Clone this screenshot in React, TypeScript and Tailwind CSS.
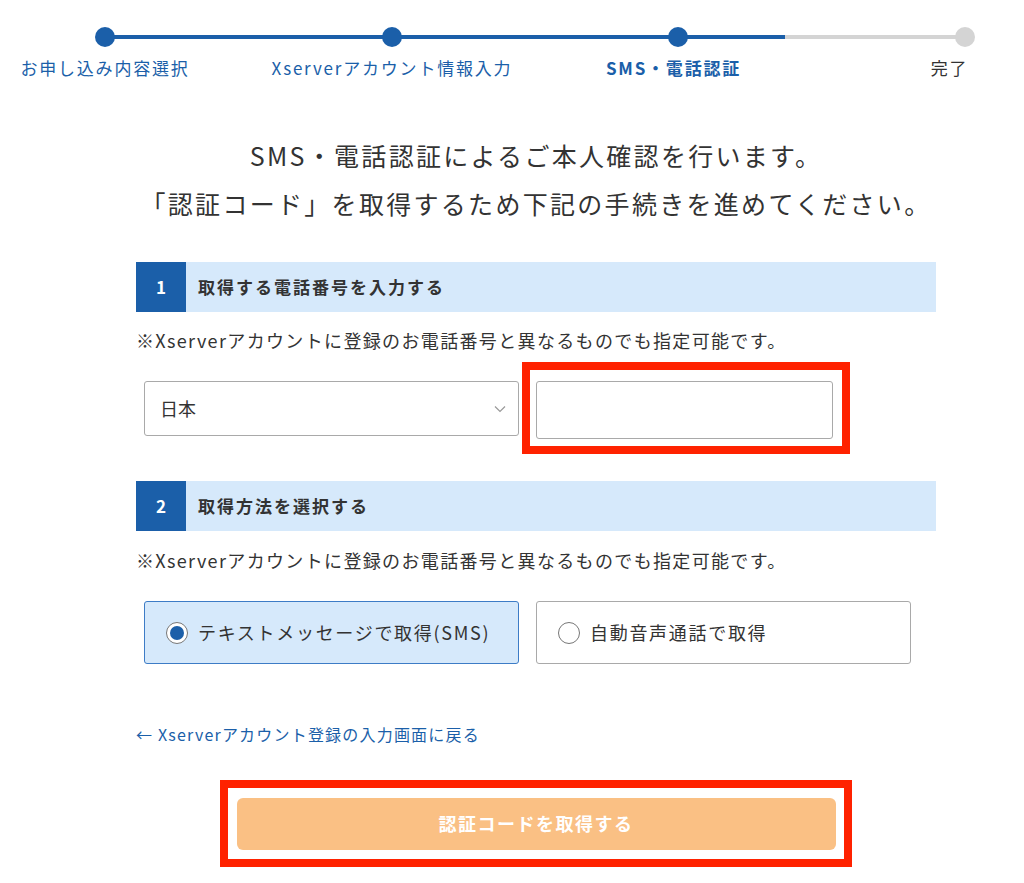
const note = "※Xserverアカウントに登録のお電話番号と異なるものでも指定可能です。";

function Steps() {
  const labels = ["お申し込み内容選択", "Xserverアカウント情報入力", "SMS・電話認証", "完了"];
  return (
    <div className="pt-[27px]">
      <div className="relative ml-[95px] w-[880px] h-[20px] flex justify-between items-center">
        <div className="absolute left-[10px] top-[8px] h-[4px] w-[860px] bg-[#d4d4d4]" />
        <div className="absolute left-[10px] top-[8px] h-[4px] w-[680px] bg-[#1b5fa9]" />
        {[0, 1, 2, 3].map((i) => (
          <div
            key={i}
            className={`relative w-[20px] h-[20px] rounded-full ${i < 3 ? "bg-[#1b5fa9]" : "bg-[#d4d4d4]"}`}
          />
        ))}
      </div>
      <div className="ml-[25px] mt-[9px] flex gap-[127px]">
        {labels.map((l, i) => (
          <div key={l} className="w-[160px] flex justify-center">
            <span
              className={`whitespace-nowrap text-[17px] leading-[24px] tracking-[1.8px] ${
                i === 2 ? "font-bold text-[#1b5fa9]" : i === 3 ? "text-[#333]" : "text-[#1b5fa9]"
              }`}
            >
              {l}
            </span>
          </div>
        ))}
      </div>
    </div>
  );
}

function SectionHead({ n, title }: { n: number; title: string }) {
  return (
    <div className="flex h-[50px] bg-[#d6e9fb]">
      <div className="w-[50px] bg-[#1b5fa9] flex items-center justify-center text-white font-bold text-[17px]">
        {n}
      </div>
      <div className="pl-[12px] flex items-center font-bold text-[17px] tracking-[2px] text-[#333]">{title}</div>
    </div>
  );
}

function Radio({ checked, label }: { checked: boolean; label: string }) {
  return (
    <div
      className={`w-[375px] h-[63px] rounded-[3px] flex items-center pl-[21px] gap-[10px] text-[18px] tracking-[1.7px] text-[#333] ${
        checked ? "bg-[#d6e9fb] border border-[#3d7cc6]" : "bg-white border border-[#a9a9a9]"
      }`}
    >
      <span className="w-[22px] h-[22px] rounded-full border border-[#777] bg-white flex items-center justify-center">
        {checked && <span className="w-[14px] h-[14px] rounded-full bg-[#1b5fa9]" />}
      </span>
      <span>{label}</span>
    </div>
  );
}

export default function App() {
  return (
    <div
      className="w-[1024px] h-[883px] overflow-hidden bg-white text-[#333]"
      style={{ fontFamily: '"Noto Sans CJK JP", "Noto Sans", sans-serif' }}
    >
      <Steps />

      <div className="ml-[136px] w-[800px]">
        <div className="mt-[51px] text-center text-[25px] leading-[48px] tracking-[2.3px] text-[#333] whitespace-nowrap">
          <p>SMS・電話認証によるご本人確認を行います。</p>
          <p>「認証コード」を取得するため下記の手続きを進めてください。</p>
        </div>

        <div className="mt-[35px]">
          <SectionHead n={1} title="取得する電話番号を入力する" />
        </div>
        <p className="mt-[15px] text-[18px] leading-[26px] tracking-[1.35px] whitespace-nowrap">{note}</p>
        <div className="mt-[28px] ml-[8px] flex gap-[17px] items-start">
          <div className="w-[375px] h-[55px] rounded-[3px] border border-[#a9a9a9] flex items-center justify-between pl-[15px] pr-[12px] text-[18px]">
            <span>日本</span>
            <svg width="12" height="8" viewBox="0 0 12 8" fill="none" stroke="#999" strokeWidth="1.2">
              <path d="M1 1.5 L6 6.5 L11 1.5" />
            </svg>
          </div>
          <div className="relative">
            <div className="w-[297px] h-[58px] rounded-[3px] border border-[#a9a9a9] bg-white" />
            <div className="absolute -left-[14px] -top-[19px] w-[328px] h-[92px] border-[8px] border-[#ff2200]" />
          </div>
        </div>

        <div className="mt-[42px]">
          <SectionHead n={2} title="取得方法を選択する" />
        </div>
        <p className="mt-[16px] text-[18px] leading-[26px] tracking-[1.35px] whitespace-nowrap">{note}</p>
        <div className="mt-[28px] ml-[8px] flex gap-[17px]">
          <Radio checked label="テキストメッセージで取得(SMS)" />
          <Radio checked={false} label="自動音声通話で取得" />
        </div>

        <p className="mt-[58px] text-[16px] leading-[24px] tracking-[1.2px] text-[#1b5fa9]">
          ← Xserverアカウント登録の入力画面に戻る
        </p>

        <div className="mt-[34px] ml-[84px] w-[632px] h-[87px] border-[8px] border-[#ff2200] flex items-center justify-center">
          <div className="w-[599px] h-[52px] rounded-[6px] bg-[#fac084] flex items-center justify-center text-white font-bold text-[18px] tracking-[1.5px]">
            認証コードを取得する
          </div>
        </div>
      </div>
    </div>
  );
}
